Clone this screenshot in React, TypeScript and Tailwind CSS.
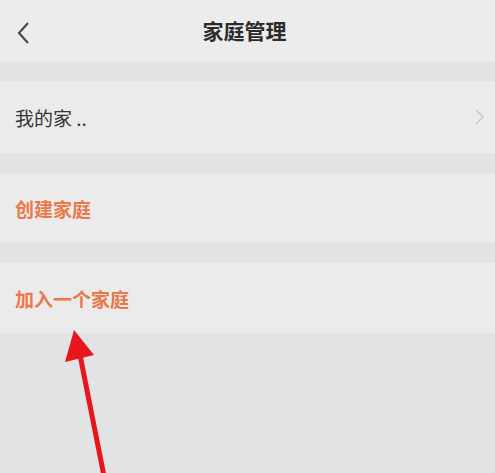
import React from "react";

const font = { fontFamily: '"Noto Sans CJK SC", "Noto Sans", sans-serif' };

function Row({ children }: { children: React.ReactNode }) {
  return (
    <div className="h-[70px] bg-[#ebebeb] flex items-center justify-between pl-[15px] pr-[9px]">
      {children}
    </div>
  );
}

export default function App() {
  return (
    <div className="relative w-[495px] h-[473px] bg-[#e2e3e5] overflow-hidden" style={font}>
      <div className="h-[61px] bg-[#ececec] flex items-center relative">
        <svg width="14" height="22" viewBox="0 0 14 22" className="absolute left-[16px] top-[22px]">
          <path d="M12 1 L3 11 L12 21" fill="none" stroke="#4a4a4a" strokeWidth="2.2" />
        </svg>
        <div className="w-full text-center text-[21px] font-bold text-[#2b2b2b] leading-none pr-[6px]">家庭管理</div>
      </div>
      <div className="h-[20px]" />
      <div className="h-[72px] bg-[#ebebeb] flex items-center justify-between pl-[15px] pr-[9px]">
        <span className="text-[19px] text-[#363636] leading-none">我的家 ..</span>
        <svg width="12" height="18" viewBox="0 0 12 18">
          <path d="M2 2 L9 9 L2 16" fill="none" stroke="#c9c9c9" strokeWidth="1.6" />
        </svg>
      </div>
      <div className="h-[20px]" />
      <Row>
        <span className="text-[19px] font-bold text-[#e9784a] leading-none">创建家庭</span>
      </Row>
      <div className="h-[20px]" />
      <Row>
        <span className="text-[19px] font-bold text-[#e9784a] leading-none">加入一个家庭</span>
      </Row>
      <svg className="absolute left-0 top-0" width="495" height="473" viewBox="0 0 495 473">
        <line x1="80" y1="355" x2="104" y2="476" stroke="#e8151d" strokeWidth="5" />
        <polygon points="74,330 65,362 94,355" fill="#e8151d" />
      </svg>
    </div>
  );
}
